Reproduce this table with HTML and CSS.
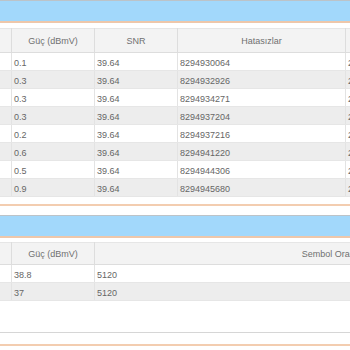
FILE: index.html
```html
<!DOCTYPE html>
<html>
<head>
<meta charset="utf-8">
<link rel="stylesheet" href="styles.css">
</head>
<body>
<div class="wrap">
  <section class="panel panel-first">
    <div class="title"></div>
    <table class="grid">
      <colgroup><col class="c83"><col class="c83"><col class="c83"><col class="c168"><col class="c83"></colgroup>
      <thead>
        <tr><th></th><th>Güç (dBmV)</th><th>SNR</th><th>Hatasızlar</th><th></th></tr>
      </thead>
      <tbody>
        <tr><td></td><td>0.1</td><td>39.64</td><td>8294930064</td><td>2</td></tr>
        <tr class="alt"><td></td><td>0.3</td><td>39.64</td><td>8294932926</td><td>2</td></tr>
        <tr><td></td><td>0.3</td><td>39.64</td><td>8294934271</td><td>2</td></tr>
        <tr class="alt"><td></td><td>0.3</td><td>39.64</td><td>8294937204</td><td>2</td></tr>
        <tr><td></td><td>0.2</td><td>39.64</td><td>8294937216</td><td>2</td></tr>
        <tr class="alt"><td></td><td>0.6</td><td>39.64</td><td>8294941220</td><td>2</td></tr>
        <tr><td></td><td>0.5</td><td>39.64</td><td>8294944306</td><td>2</td></tr>
        <tr class="alt"><td></td><td>0.9</td><td>39.64</td><td>8294945680</td><td>2</td></tr>
      </tbody>
    </table>
  </section>
  <section class="panel panel-second">
    <div class="title"></div>
    <table class="grid">
      <colgroup><col class="c83"><col class="c83"><col class="c470"></colgroup>
      <thead>
        <tr><th></th><th>Güç (dBmV)</th><th>Sembol Oranı</th></tr>
      </thead>
      <tbody>
        <tr><td></td><td>38.8</td><td>5120</td></tr>
        <tr class="alt"><td></td><td>37</td><td>5120</td></tr>
      </tbody>
    </table>
  </section>
  <section class="panel panel-third">
    <div class="title"></div>
  </section>
</div>
</body>
</html>
```
FILE: styles.css
```css
html, body {
  margin: 0;
  padding: 0;
  background: #ffffff;
  overflow: hidden;
}
body {
  font-family: "Liberation Sans", Arial, sans-serif;
  font-size: 9px;
  color: #666666;
}
.wrap {
  margin-left: -72px;
  width: 700px;
}
.panel {
  border-top: 2px solid #f3cdb0;
  padding-top: 9px;
}
.panel-first {
  margin-top: -11px;
  padding-bottom: 7px;
}
.panel-second {
  min-height: 117px;
  border-bottom: 1px solid #d6d6d6;
  margin-bottom: 11px;
}
.title {
  height: 20px;
  background: #a2d8fb;
  border-top: 1px solid #bcc3c8;
  border-bottom: 2px solid #eec7aa;
}
.grid {
  margin-top: 5px;
  border-collapse: collapse;
  table-layout: fixed;
}
.panel-second .grid {
  margin-top: 4px;
}
.c83 { width: 83px; }
.c168 { width: 168px; }
.c470 { width: 470px; }
th {
  background: #f3f3f3;
  font-weight: normal;
  text-align: center;
  height: 23px;
  padding: 0 2px;
  border: 1px solid #dddddd;
  border-top: 1px solid #e6e6e6;
  color: #707070;
}
.panel-second th {
  height: 21px;
}
td {
  height: 14px;
  padding: 3px 2px 0;
  line-height: 11px;
  text-align: left;
  border-left: 1px solid #e3e3e3;
  border-bottom: 1px solid #e6e6e6;
  white-space: nowrap;
}
tr.alt td {
  background: #ededed;
}
```
